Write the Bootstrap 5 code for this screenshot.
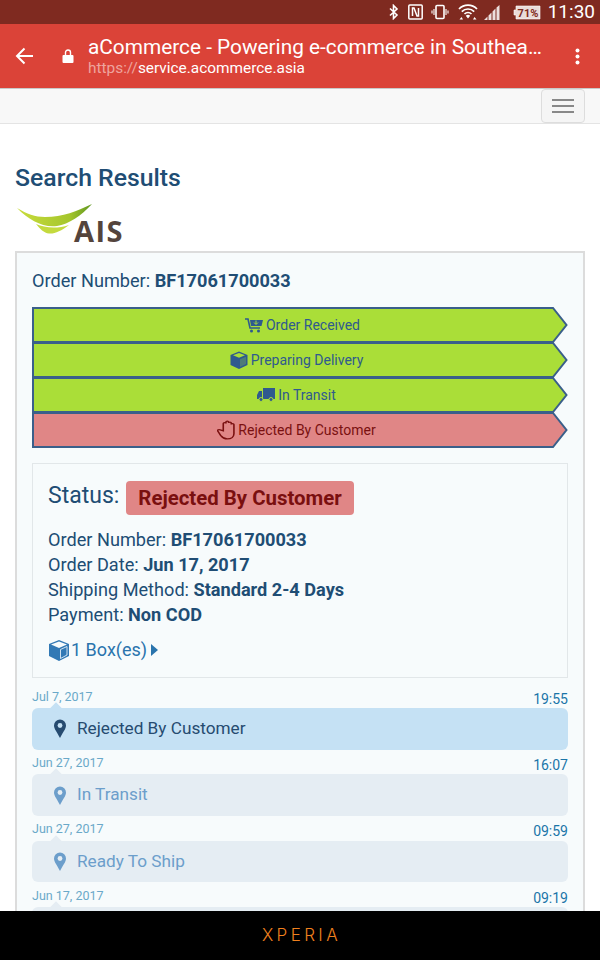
<!DOCTYPE html>
<html lang="en"><head><meta charset="utf-8"><title>Search Results</title>
<link href="https://cdn.jsdelivr.net/npm/bootstrap@5.3.0/dist/css/bootstrap.min.css" rel="stylesheet">
<style>
html,body{height:960px;overflow:hidden}
body{font-family:Roboto,"Liberation Sans",sans-serif;color:#204d74;background:#fff}
.shell{height:960px}
.sysbar{height:24px;background:#7f2a20;color:#fff;padding-right:5px}
.sysbar svg{display:block}
.gap9{margin-right:9px}.gap8{margin-right:8px}.gap6{margin-right:6px}
.clock{font-size:19px;line-height:24px;margin-left:7px}
.batt{margin-left:13px}
.chromebar{height:64px;background:#db4338;color:#fff}
.backarrow{margin-left:15px;width:19px}
.lockicon{margin-left:28px;margin-right:14px;width:12px}
.pagetitle{font-size:20.8px;line-height:24px;width:460px;white-space:nowrap;overflow:hidden;text-overflow:ellipsis;margin-top:0}
.pageurl{font-size:15.4px;line-height:18px;margin-top:0}
.pageurl span{color:#eea49e}
.dots{margin-left:auto;margin-right:20px;width:5px}
.topnav{height:36px;background:#f8f8f8;border-top:1px solid #c9c9c9;border-bottom:1px solid #e4e4e4;padding:0 15px 0 0;justify-content:flex-end;flex-shrink:0}
.burger{width:44px;height:34px;border:1px solid #ddd;border-radius:4px;background:#f5f5f5;padding:0}
.burger i{display:block;width:22px;height:2px;background:#888;margin:4px auto}
.content{min-height:0;overflow:hidden;padding:0 15px}
.pagehead{font-size:24.8px;font-weight:500;line-height:30px;margin:39px 0 0;color:#204d74}
.logo{display:block;margin:11px 0 0 2px}
.logo text{font-family:"Open Sans",Lato,sans-serif;font-weight:700;font-size:29px;letter-spacing:1.5px;fill:#54443c}
.resultbox{border:2px solid #dcdcdc;background:#f7fbfc;margin-top:0;padding:15px;height:800px}
.ordernum{font-size:18.15px;line-height:26px;margin-bottom:13px}
strong{font-weight:700}
.stepitem{height:36px;margin-bottom:-1px;font-size:14px;color:#2f5a8e}
.stepbody{flex:1;border:2px solid #3a5f8a;border-right:0;height:36px;display:flex;align-items:center;justify-content:center;padding-left:7px;gap:3px}
.stepfirst{padding-left:19px}
.s-green .stepbody{background:#aade38}
.s-red .stepbody{background:#e08686;color:#7a1010}
.stepitem svg.tip{display:block;flex:none}
.statuspanel{border:1px solid #e2e7e9;margin-top:16px;height:215px;padding:15px}
.statusline{font-size:23px;line-height:34px;margin-bottom:12px;gap:7px}
.statuspill{background:#e08686;color:#7a0f0f;font-weight:700;font-size:20.4px;line-height:34px;padding:0 12px;border-radius:4px;margin-top:2px}
.infoline{font-size:18.15px;line-height:25px}
.boxlink{color:#2a74ad;font-size:18px;line-height:26px;margin-top:10px}
.tl-head{font-size:12.5px;line-height:17px;color:#6aa9c9;height:20.5px}
.tl-time{font-size:14px;color:#1a75a8;line-height:17px;margin-top:3px}
.tl-row{height:41.5px;border-radius:6px;font-size:17.2px;background:#e5edf3;color:#6c9ecb;padding-left:20px;gap:9px;position:relative}
.tl-row::before{content:"";position:absolute;left:20px;top:-4px;width:8px;height:8px;background:inherit;transform:rotate(45deg)}
.tl-row>*{position:relative}
.tl-on{background:#c5e1f4;color:#264b70}
.tl-item{height:66.4px}
.tl-first{margin-top:9.5px}
.xfoot{height:49px;background:#000;color:#f0801e;flex-shrink:0}
.xfoot span{font-family:Inter,"Liberation Sans",sans-serif;font-size:17px;font-weight:300;letter-spacing:3.4px;margin-right:-3px}
</style></head>
<body>
<div class="shell d-flex flex-column">
  <div class="sysbar d-flex justify-content-end align-items-center flex-shrink-0">
    <svg class="gap9" width="10" height="16" viewBox="0 0 10 16"><path d="M1 4.500 8 11l-3.500 3.500v-13L8 5 1 11.500" fill="none" stroke="#fff" stroke-width="1.600"/></svg>
    <svg class="gap8" width="15" height="16" viewBox="0 0 15 16"><rect x=".8" y="1" width="13.400" height="14" rx="1" fill="none" stroke="#fff" stroke-width="1.500"/><path d="M4.500 12V4H6l3 8h1.500V4" fill="none" stroke="#fff" stroke-width="1.500"/></svg>
    <svg class="gap9" width="18" height="16" viewBox="0 0 18 16"><rect x="5" y="1.500" width="8" height="13" rx="1" fill="none" stroke="#fff" stroke-width="1.600"/><path d="M3 5v6M15 5v6M1 6.500v3M17 6.500v3" stroke="#fff" stroke-width="1.100"/></svg>
    <svg class="gap6" width="20" height="16" viewBox="0 0 20 16"><path d="M1 5a12.500 12.500 0 0 1 18 0M3.800 7.600a8.700 8.700 0 0 1 12.400 0M6.500 10a5 5 0 0 1 7 0" fill="none" stroke="#fff" stroke-width="1.700"/><path d="M10 14.500l-2.200-2.700a3.200 3.200 0 0 1 4.400 0zM1.500 15.500l2-2.500 1.500 2.500zM15 15.500l1.500-2.500 2 2.500z" fill="#fff"/></svg>
    <svg width="16" height="15" viewBox="0 0 16 15"><path d="M0 15 3.500 11.500V15zM4.500 15V10.500L7.500 7.500V15zM8.500 15V6.500L11.500 3.500V15zM12.500 15V2.500L15.500 0V15z" fill="#fff" opacity=".85"/></svg>
    <svg class="batt" width="28" height="15" viewBox="0 0 28 15"><path d="M3 1h24v13H3v-4H1V5h2z" fill="#eadcd9" stroke="#fff" stroke-width=".6"/><text x="15" y="11.500" text-anchor="middle" font-size="11" font-weight="700" fill="#7f2a20" font-family="Roboto">71%</text></svg>
    <span class="clock">11:30</span>
  </div>
  <div class="chromebar d-flex align-items-center flex-shrink-0">
    <svg class="backarrow" height="18" viewBox="0 0 19 18"><path d="M18 9H2M9.500 1.500 2 9l7.500 7.500" fill="none" stroke="#fff" stroke-width="2"/></svg>
    <svg class="lockicon" height="14" viewBox="0 0 12 14"><path d="M1.500 6h9a1 1 0 0 1 1 1v6a1 1 0 0 1-1 1h-9a1 1 0 0 1-1-1V7a1 1 0 0 1 1-1z" fill="#fff"/><path d="M3.500 6.500V3.500a2.500 2.500 0 0 1 5 0v3" fill="none" stroke="#fff" stroke-width="1.400"/></svg>
    <div>
      <div class="pagetitle">aCommerce - Powering e-commerce in Southeast Asia</div>
      <div class="pageurl"><span>https://</span>service.acommerce.asia</div>
    </div>
    <svg class="dots" height="17" viewBox="0 0 5 17"><circle cx="2.500" cy="2.500" r="2" fill="#fff"/><circle cx="2.500" cy="8.500" r="2" fill="#fff"/><circle cx="2.500" cy="14.500" r="2" fill="#fff"/></svg>
  </div>
  <nav class="navbar topnav d-flex align-items-center py-0">
    <button class="burger" type="button" aria-label="Toggle navigation"><i></i><i></i><i></i></button>
  </nav>
  <main class="content flex-grow-1">
    <h1 class="pagehead">Search Results</h1>
    <svg class="logo" width="112" height="47" viewBox="0 0 112 47">
      <defs><linearGradient id="lg" x1="0" x2="1" y1="0" y2="0"><stop offset="0" stop-color="#c9dc3c"/><stop offset=".7" stop-color="#a5c62c"/><stop offset="1" stop-color="#5f9620"/></linearGradient></defs>
      <path d="M0 4C10 10 18 13 28 13 46 13 60 7 75 0 64 12 52 20 40 22 26 24 12 16 0 4z" fill="url(#lg)"/>
      <path d="M19 20C28 24 40 25 52 21 44 27 38 30 32 29.500 27 29 23 25 19 20z" fill="#c4da3e"/>
      <text x="57" y="38">AIS</text>
    </svg>
    <section class="resultbox">
      <div class="ordernum">Order Number: <strong>BF17061700033</strong></div>
      <div class="stepitem s-green d-flex">
        <div class="stepbody stepfirst"><svg width="18" height="15" viewBox="0 0 18 15"><path d="M0 1h3l2 9h10" fill="none" stroke="#2f5a8e" stroke-width="1.600"/><path d="M5 2h13l-1.500 6H6z" fill="#2f5a8e"/><path d="M11 2.500v3.500M9 4.500l2 2 2-2" stroke="#aade38" fill="none"/><circle cx="6.500" cy="13" r="1.500" fill="#2f5a8e"/><circle cx="13.500" cy="13" r="1.500" fill="#2f5a8e"/></svg><span>Order Received</span></div>
        <svg class="tip" width="16" height="36" viewBox="0 0 16 36"><path d="M0 1h1l13.500 17L1 35H0z" fill="#aade38"/><path d="M0 1h1l13.500 17L1 35H0" fill="none" stroke="#3a5f8a" stroke-width="2"/></svg>
      </div>
      <div class="stepitem s-green d-flex">
        <div class="stepbody"><svg width="18" height="18" viewBox="0 0 18 18"><path d="M9 .5 17.500 4v10L9 18 .5 14V4z" fill="#2f5a8e"/><path d="M3 4.300 9 6.800l6-2.500L9 2z" fill="#aade38"/><path d="M10 8.200l6-2.400v7.300l-6 2.900z" fill="#aade38" opacity=".25"/></svg><span>Preparing Delivery</span></div>
        <svg class="tip" width="16" height="36" viewBox="0 0 16 36"><path d="M0 1h1l13.500 17L1 35H0z" fill="#aade38"/><path d="M0 1h1l13.500 17L1 35H0" fill="none" stroke="#3a5f8a" stroke-width="2"/></svg>
      </div>
      <div class="stepitem s-green d-flex">
        <div class="stepbody"><svg width="18" height="14" viewBox="0 0 18 14"><path d="M6 0h12v11H6zM0 7l2-4h3v8H0z" fill="#2f5a8e"/><circle cx="4" cy="11.500" r="2" fill="#2f5a8e" stroke="#aade38"/><circle cx="14" cy="11.500" r="2" fill="#2f5a8e" stroke="#aade38"/></svg><span>In Transit</span></div>
        <svg class="tip" width="16" height="36" viewBox="0 0 16 36"><path d="M0 1h1l13.500 17L1 35H0z" fill="#aade38"/><path d="M0 1h1l13.500 17L1 35H0" fill="none" stroke="#3a5f8a" stroke-width="2"/></svg>
      </div>
      <div class="stepitem s-red d-flex">
        <div class="stepbody"><svg width="18" height="20" viewBox="0.8 0.5 13.500 19.500" preserveAspectRatio="none"><path d="M5.500 11V4a1 1 0 0 1 2 0V2.500a1 1 0 0 1 2 0V3.500a1 1 0 0 1 2 0V5a1 1 0 0 1 2 0v9c0 3-2 5-5 5-2.500 0-3.500-1-5-3.500L1.500 11.500c-.7-1.200.8-2.300 1.800-1.300z" fill="none" stroke="#7a1010" stroke-width="1.200"/></svg><span>Rejected By Customer</span></div>
        <svg class="tip" width="16" height="36" viewBox="0 0 16 36"><path d="M0 1h1l13.500 17L1 35H0z" fill="#e08686"/><path d="M0 1h1l13.500 17L1 35H0" fill="none" stroke="#3a5f8a" stroke-width="2"/></svg>
      </div>
      <div class="statuspanel">
        <div class="statusline d-flex align-items-start"><span>Status:</span><span class="statuspill">Rejected By Customer</span></div>
        <div class="infoline">Order Number: <strong>BF17061700033</strong></div>
        <div class="infoline">Order Date: <strong>Jun 17, 2017</strong></div>
        <div class="infoline">Shipping Method: <strong>Standard 2-4 Days</strong></div>
        <div class="infoline">Payment: <strong>Non COD</strong></div>
        <div class="boxlink d-flex align-items-center">
          <svg width="23" height="21" viewBox="0 0 23 21"><path d="M11 0 21 4v12L11 21 1 16V4z" fill="#3279b5"/><path d="M3 4.500 11 8l8-3.500L11 1.500z" fill="#f7fbfc"/><path d="M12.500 9.500 19 6.500v8.500l-6.500 3.500z" fill="#3279b5" stroke="#f7fbfc" stroke-width=".8"/></svg>
          <span>1 Box(es)</span>
          <svg class="ms-1" width="7" height="12" viewBox="0 0 7 12"><path d="M0 0l7 6-7 6z" fill="#2a74ad"/></svg>
        </div>
      </div>
      <div class="tl-item tl-first">
        <div class="tl-head d-flex justify-content-between"><span>Jul 7, 2017</span><span class="tl-time">19:55</span></div>
        <div class="tl-row tl-on d-flex align-items-center"><svg width="16" height="19" viewBox="0 0 16 19"><path d="M8 19C5 13 2 10 2 6.500a6 6 0 0 1 12 0C14 10 11 13 8 19z" fill="#264b70"/><circle cx="8" cy="6.500" r="2.400" fill="#c5e1f4"/></svg><span>Rejected By Customer</span></div>
      </div>
      <div class="tl-item">
        <div class="tl-head d-flex justify-content-between"><span>Jun 27, 2017</span><span class="tl-time">16:07</span></div>
        <div class="tl-row d-flex align-items-center"><svg width="16" height="19" viewBox="0 0 16 19"><path d="M8 19C5 13 2 10 2 6.500a6 6 0 0 1 12 0C14 10 11 13 8 19z" fill="#6c9ecb"/><circle cx="8" cy="6.500" r="2.400" fill="#e5edf3"/></svg><span>In Transit</span></div>
      </div>
      <div class="tl-item">
        <div class="tl-head d-flex justify-content-between"><span>Jun 27, 2017</span><span class="tl-time">09:59</span></div>
        <div class="tl-row d-flex align-items-center"><svg width="16" height="19" viewBox="0 0 16 19"><path d="M8 19C5 13 2 10 2 6.500a6 6 0 0 1 12 0C14 10 11 13 8 19z" fill="#6c9ecb"/><circle cx="8" cy="6.500" r="2.400" fill="#e5edf3"/></svg><span>Ready To Ship</span></div>
      </div>
      <div class="tl-item">
        <div class="tl-head d-flex justify-content-between"><span>Jun 17, 2017</span><span class="tl-time">09:19</span></div>
        <div class="tl-row d-flex align-items-center"></div>
      </div>
    </section>
  </main>
  <footer class="xfoot d-flex align-items-center justify-content-center"><span>XPERIA</span></footer>
</div>
<script src="https://cdn.jsdelivr.net/npm/bootstrap@5.3.0/dist/js/bootstrap.bundle.min.js"></script>
</body></html>
